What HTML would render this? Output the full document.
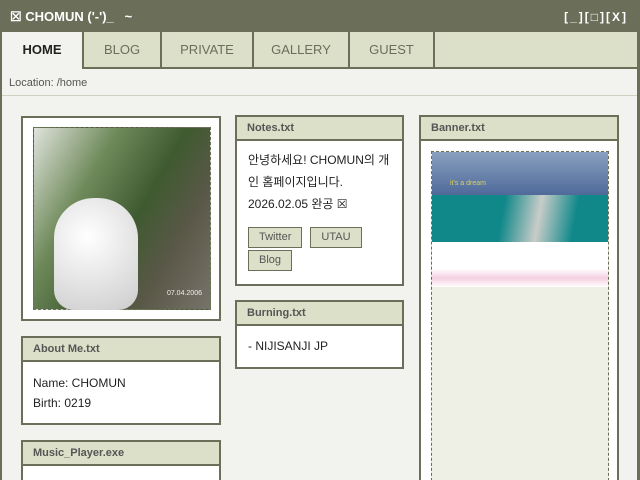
<!DOCTYPE html>
<html><head><meta charset="utf-8"><style>
*{box-sizing:border-box;margin:0;padding:0}
html,body{width:640px;height:480px;overflow:hidden}
body{background:#6b6e58;font-family:"Liberation Sans","Noto Sans CJK KR",sans-serif;position:relative}
.title{position:absolute;left:10px;top:9px;color:#fff;font-weight:bold;font-size:13px}
.ctrl{position:absolute;right:12px;top:10px;color:#fff;font-size:12px;font-weight:bold;letter-spacing:2px}
.win{position:absolute;left:2px;top:32px;width:635px;height:448px;background:#f2f3ee;overflow:hidden}
.tabs{position:absolute;left:0;top:0;width:635px;height:37px;background:#dde0c9;border-bottom:2px solid #6b6e58}
.tab{position:absolute;top:0;height:35px;border-right:2px solid #6b6e58;color:#6b6e58;font-size:13px;text-align:center;line-height:35px}
.tab.on{background:#f2f3ee;color:#222;font-weight:bold;height:37px}
.loc{position:absolute;left:0;top:37px;width:635px;height:27px;border-bottom:1px solid #cfd2bf;font-size:11px;color:#555;padding:8px 7px}
.p{position:absolute;background:#fff;border:2px solid #6b6e58}
.h{height:24px;background:#dde0c9;border-bottom:2px solid #6b6e58;font-size:11px;font-weight:bold;color:#555;padding:5px 10px}
.b{padding:10px;font-size:12px;color:#222;line-height:22px}
.btn{display:inline-block;background:#dde0c9;border:1px solid #6b6e58;color:#555;font-size:11px;padding:3px 10px;line-height:13px;margin:0 8px 2px 0}
</style></head><body>
<div class="title">☒ CHOMUN ('-')_ &nbsp; ~</div>
<div class="ctrl">[_][□][X]</div>
<div class="win">
<div class="tabs">
<div class="tab on" style="left:0;width:82px">HOME</div>
<div class="tab" style="left:82px;width:78px">BLOG</div>
<div class="tab" style="left:160px;width:92px">PRIVATE</div>
<div class="tab" style="left:252px;width:96px">GALLERY</div>
<div class="tab" style="left:348px;width:85px">GUEST</div>
</div>
<div class="loc">Location: /home</div>
<div class="p" style="left:19px;top:84px;width:200px;height:205px">
<div style="position:absolute;left:10px;top:9px;width:178px;height:183px;border:1px dashed #6b6e58;background:linear-gradient(120deg,#dfe3dc 0%,#6f8a5a 30%,#3f5a30 55%,#5a5848 75%,#77736a 100%)">
<div style="position:absolute;left:20px;top:70px;width:84px;height:112px;border-radius:40px 40px 20px 20px;background:radial-gradient(circle at 40% 35%,#fff,#ccc)"></div>
<div style="position:absolute;right:8px;bottom:12px;color:#eee;font-size:7px">07.04.2006</div>
</div></div>
<div class="p" style="left:19px;top:304px;width:200px;height:89px"><div class="h">About Me.txt</div><div class="b" style="line-height:20px;padding-top:11px">Name: CHOMUN<br>Birth: 0219</div></div>
<div class="p" style="left:19px;top:408px;width:200px;height:60px"><div class="h">Music_Player.exe</div></div>
<div class="p" style="left:233px;top:83px;width:169px;height:171px"><div class="h">Notes.txt</div><div class="b" style="padding:8px 11px">안녕하세요! CHOMUN의 개인 홈페이지입니다.<br>2026.02.05 완공 ☒<div style="margin-top:12px;line-height:0"><span class="btn">Twitter</span><span class="btn">UTAU</span><br><span class="btn">Blog</span></div></div></div>
<div class="p" style="left:233px;top:268px;width:169px;height:69px"><div class="h">Burning.txt</div><div class="b" style="padding:9px 11px">- NIJISANJI JP</div></div>
<div class="p" style="left:417px;top:83px;width:200px;height:380px"><div class="h">Banner.txt</div>
<div style="position:absolute;left:10px;top:34px;width:178px;height:340px;border:1px dashed #6b6e58;background:#eef0e6">
<div style="height:43px;background:linear-gradient(#8aa0c0,#4f6a9a);color:#d8d060;font-size:7px;padding:28px 0 0 18px">it's a dream</div>
<div style="height:47px;background:linear-gradient(100deg,#10888a 40%,#c8ccc8 60%,#10888a 80%)"></div>
<div style="height:45px;background:linear-gradient(#fff 60%,#f4d0e0 80%,#fff)"></div>
</div></div>
</div>
</body></html>
